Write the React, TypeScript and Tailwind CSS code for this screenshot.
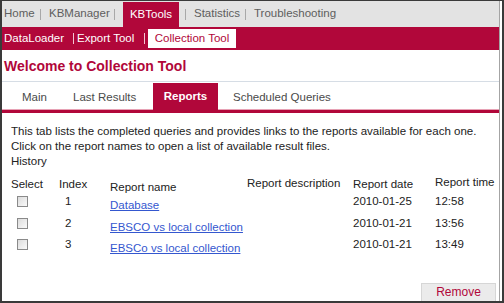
const reports = [
  { index: 1, name: "Database", date: "2010-01-25", time: "12:58" },
  { index: 2, name: "EBSCO vs local collection", date: "2010-01-21", time: "13:56" },
  { index: 3, name: "EBSCo vs local collection", date: "2010-01-21", time: "13:49" },
];

const Sep = ({ light }: { light?: boolean }) => (
  <div className={`w-px h-[11px] self-center ${light ? "bg-[#f3c6d2]" : "bg-[#a8a8a8]"}`} />
);

const App = () => {
  return (
    <div
      className="w-[504px] h-[303px] bg-white border-t border-l-2 border-r-2 border-b-2 border-[#3a3a3a] flex text-[11.5px] text-[#222]"
      style={{ fontFamily: '"Liberation Sans", Arial, sans-serif' }}
    >
      <div className="flex-1 flex flex-col border-r border-[#a4a4a4] min-w-0">
        {/* Top navigation */}
        <div className="h-[26px] flex items-stretch bg-[#e3e3e3] text-[#5e5e5e] text-[11.5px]">
          <div className="w-[38px] pl-[2px] flex items-center">Home</div>
          <Sep />
          <div className="w-[73px] pl-[8px] flex items-center">KBManager</div>
          <Sep />
          <div className="ml-[8px] w-[56px] mt-px bg-[#b1073a] text-white flex items-center justify-center">KBTools</div>
          <div className="w-[6px]" />
          <Sep />
          <div className="w-[59px] pl-[8px] flex items-center">Statistics</div>
          <Sep />
          <div className="pl-[8px] flex items-center">Troubleshooting</div>
        </div>

        {/* Sub navigation */}
        <div className="h-[23px] flex items-center bg-[#b1073a] text-white">
          <div className="w-[71px] pl-[2px]">DataLoader</div>
          <Sep light />
          <div className="w-[70px] pl-[3px]">Export Tool</div>
          <Sep light />
          <div className="ml-[3px] h-[19px] w-[88px] bg-white text-[#b1073a] flex items-center justify-center">
            Collection Tool
          </div>
        </div>

        {/* Heading */}
        <div className="h-[32px] pl-[2px] border-b border-[#d6dde5] flex items-center pt-[1px]">
          <h1 className="text-[14px] font-bold text-[#b1073a]">Welcome to Collection Tool</h1>
        </div>

        {/* Tabs */}
        <div className="h-[28px] flex items-end border-b border-[#e7a2b5] text-[#4a4a4a]">
          <div className="w-[58px] pl-[20px] h-[26px] flex items-center pt-[3px]">Main</div>
          <div className="w-[93px] pl-[13px] h-[26px] flex items-center pt-[3px]">Last Results</div>
          <div className="w-[65px] h-[27px] -mb-px bg-[#b1073a] text-white font-bold flex items-center justify-center pt-[1px]">
            Reports
          </div>
          <div className="pl-[15px] h-[26px] flex items-center pt-[3px]">Scheduled Queries</div>
        </div>
        <div className="h-[3px] bg-[#b1073a]" />

        {/* Body */}
        <div className="flex-1 flex flex-col pl-[9px] pt-[11px] leading-[15px]">
          <p>This tab lists the completed queries and provides links to the reports available for each one.</p>
          <p>Click on the report names to open a list of available result files.</p>
          <p>History</p>

          <div className="mt-[5px] grid grid-cols-[48px_51px_137px_106px_82px_1fr] h-[16px] items-center">
            <div>Select</div>
            <div>Index</div>
            <div className="mt-[6px]">Report name</div>
            <div className="-mt-[2px]">Report description</div>
            <div>Report date</div>
            <div className="-mt-[4px]">Report time</div>
          </div>

          {reports.map((r) => (
            <div key={r.index} className="grid grid-cols-[48px_51px_137px_106px_82px_1fr] h-[21.5px] items-center">
              <div className="pl-[6px]">
                <div className="w-[11px] h-[11px] border border-[#8a8a8a] bg-gradient-to-br from-[#dcdcdc] to-[#fafafa]" />
              </div>
              <div className="pl-[6px]">{r.index}</div>
              <div className="mt-[8px]">
                <a href="#" className="text-[#3457cf] underline">{r.name}</a>
              </div>
              <div />
              <div>{r.date}</div>
              <div>{r.time}</div>
            </div>
          ))}

          <div className="flex-1" />
          <div className="flex justify-end pr-[3px]">
            <button className="w-[75px] h-[18px] border border-b-0 border-[#d6d6d6] bg-[#ebebeb] text-[#b1073a] text-[12px] flex items-center justify-center">
              Remove
            </button>
          </div>
        </div>
      </div>
      <div className="w-[2px]" />
    </div>
  );
};

export default App;
